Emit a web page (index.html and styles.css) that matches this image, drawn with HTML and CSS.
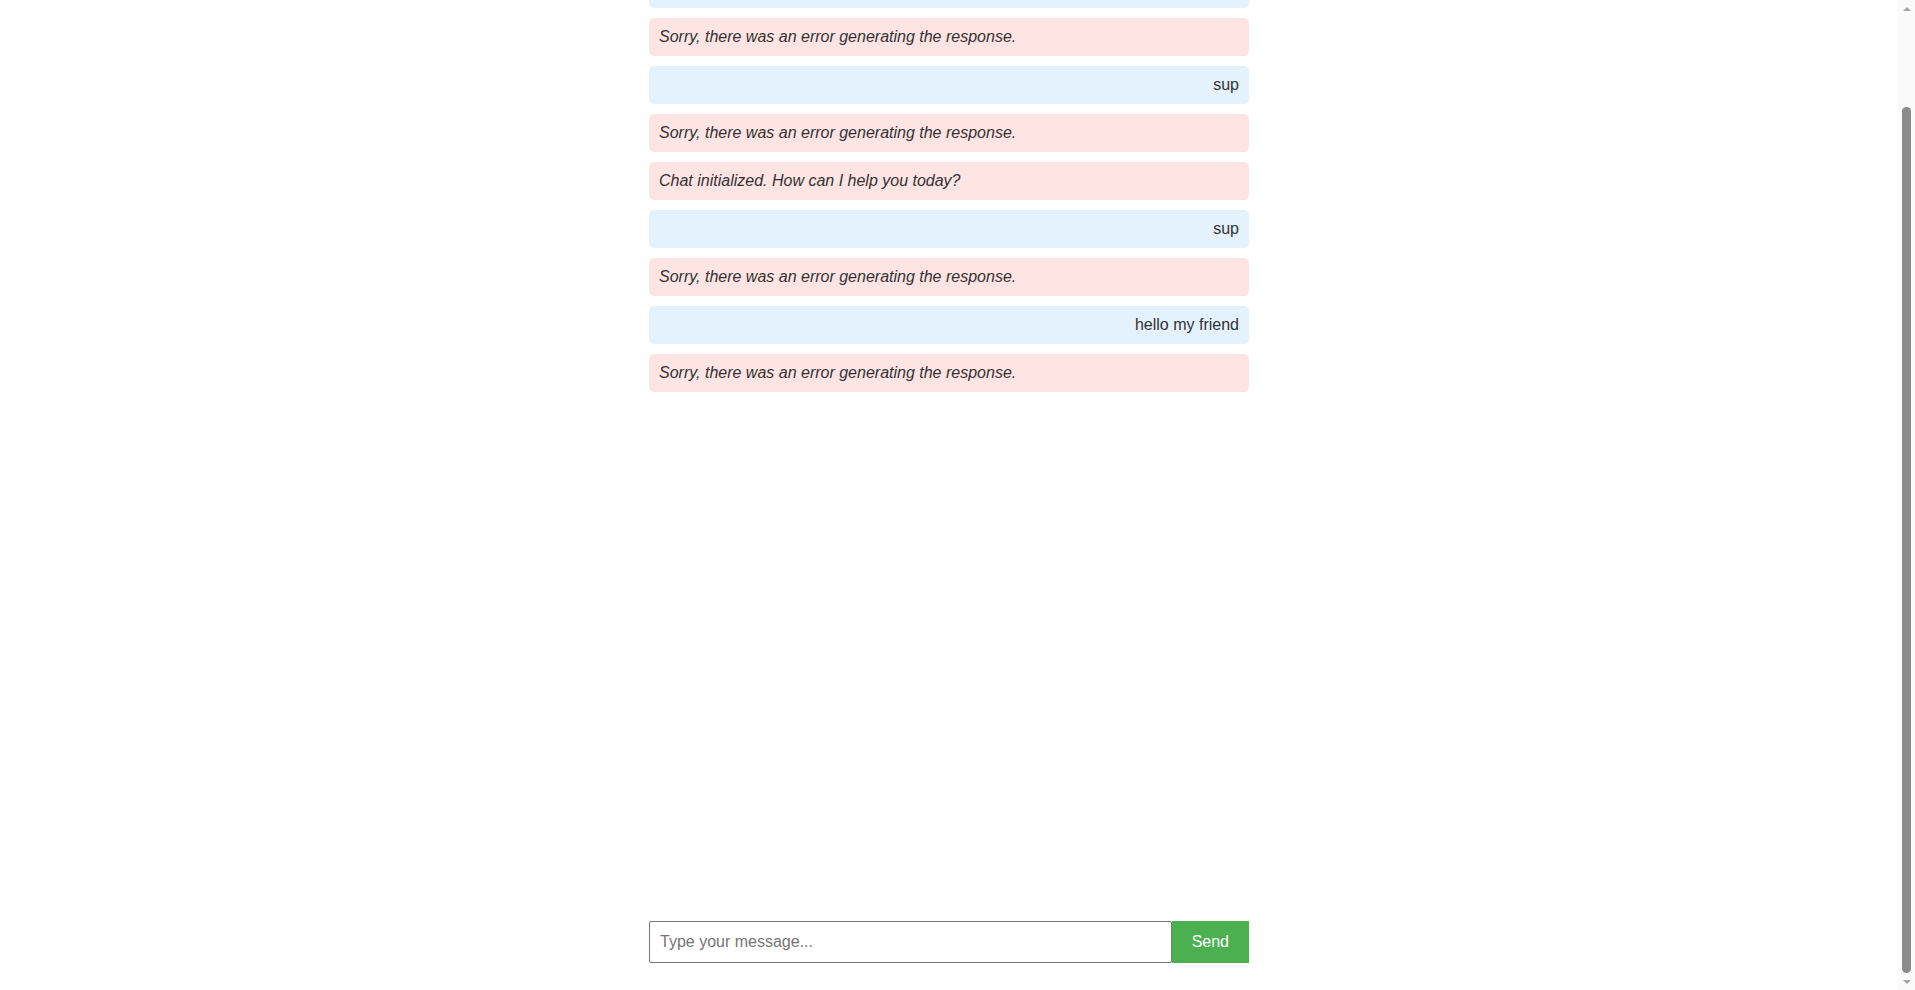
FILE: index.html
```html
<!DOCTYPE html>
<html lang="en">
<head>
<meta charset="utf-8">
<title>Chat</title>
<link rel="stylesheet" href="styles.css">
</head>
<body>
<div class="page" id="page">
  <div class="chat">
    <div class="messages">
      <div class="msg bot">Chat initialized. How can I help you today?</div>
      <div class="msg user">hello</div>
      <div class="msg bot">Sorry, there was an error generating the response.</div>
      <div class="msg user">sup</div>
      <div class="msg bot">Sorry, there was an error generating the response.</div>
      <div class="msg bot">Chat initialized. How can I help you today?</div>
      <div class="msg user">sup</div>
      <div class="msg bot">Sorry, there was an error generating the response.</div>
      <div class="msg user">hello my friend</div>
      <div class="msg bot">Sorry, there was an error generating the response.</div>
    </div>
    <form class="input-row">
      <input class="input" type="text" placeholder="Type your message...">
      <button class="send" type="button">Send</button>
    </form>
  </div>
</div>
<div class="scrollbar" aria-hidden="true">
  <div class="sb-arrow sb-up"></div>
  <div class="sb-track"><div class="sb-thumb"></div></div>
  <div class="sb-arrow sb-down"></div>
</div>
<script src="script.js"></script>
</body>
</html>
```

FILE: styles.css
```css
html, body {
  margin: 0;
  padding: 0;
  height: 100%;
  overflow: hidden;
  background: #ffffff;
}
body {
  display: flex;
  font-family: Arial, "Liberation Sans", sans-serif;
  font-size: 16px;
  color: #333333;
}
.page {
  flex: 1;
  min-width: 0;
  height: 100vh;
  overflow-y: auto;
  scrollbar-width: none;
}
.page::-webkit-scrollbar {
  display: none;
}
.scrollbar {
  width: 17px;
  height: 100vh;
  flex: none;
  display: flex;
  flex-direction: column;
  background: #fafafa;
}
.sb-arrow {
  height: 17px;
  flex: none;
  display: flex;
  align-items: center;
  justify-content: center;
}
.sb-up::before {
  content: "";
  border-left: 4px solid transparent;
  border-right: 4px solid transparent;
  border-bottom: 4px solid #a3a3a3;
}
.sb-down::before {
  content: "";
  border-left: 4px solid transparent;
  border-right: 4px solid transparent;
  border-top: 4px solid #a3a3a3;
}
.sb-track {
  flex: 1;
  display: flex;
  flex-direction: column;
  justify-content: flex-end;
  padding: 0 4px;
}
.sb-thumb {
  height: 866px;
  background: #8b8b8b;
  border-radius: 5px;
}
.chat {
  width: 600px;
  margin: 0 auto;
  padding: 20px 0 27px;
}
.messages {
  height: 100vh;
}
.msg {
  padding: 10px;
  line-height: 18px;
  border-radius: 5px;
  margin-bottom: 10px;
}
.msg.user {
  background: #e3f2fd;
  text-align: right;
}
.msg.bot {
  background: #ffe4e4;
  font-style: italic;
}
.input-row {
  display: flex;
  margin: 9px 0 0;
}
.input {
  flex: 1;
  min-width: 0;
  margin: 0;
  padding: 11px 10px;
  line-height: 18px;
  font-family: Arial, "Liberation Sans", sans-serif;
  font-size: 16px;
  color: #333333;
  border: 1px solid #767676;
  border-radius: 2px;
  outline: none;
}
.input::placeholder {
  color: #757575;
}
.send {
  margin: 0;
  padding: 0 20px;
  font-family: Arial, "Liberation Sans", sans-serif;
  font-size: 16px;
  color: #ffffff;
  background: #4caf50;
  border: none;
  cursor: pointer;
}
```

FILE: script.js
```js
(function () {
  var page = document.getElementById('page');
  function toBottom() {
    page.scrollTop = page.scrollHeight;
  }
  toBottom();
  window.addEventListener('load', toBottom);
})();
```
